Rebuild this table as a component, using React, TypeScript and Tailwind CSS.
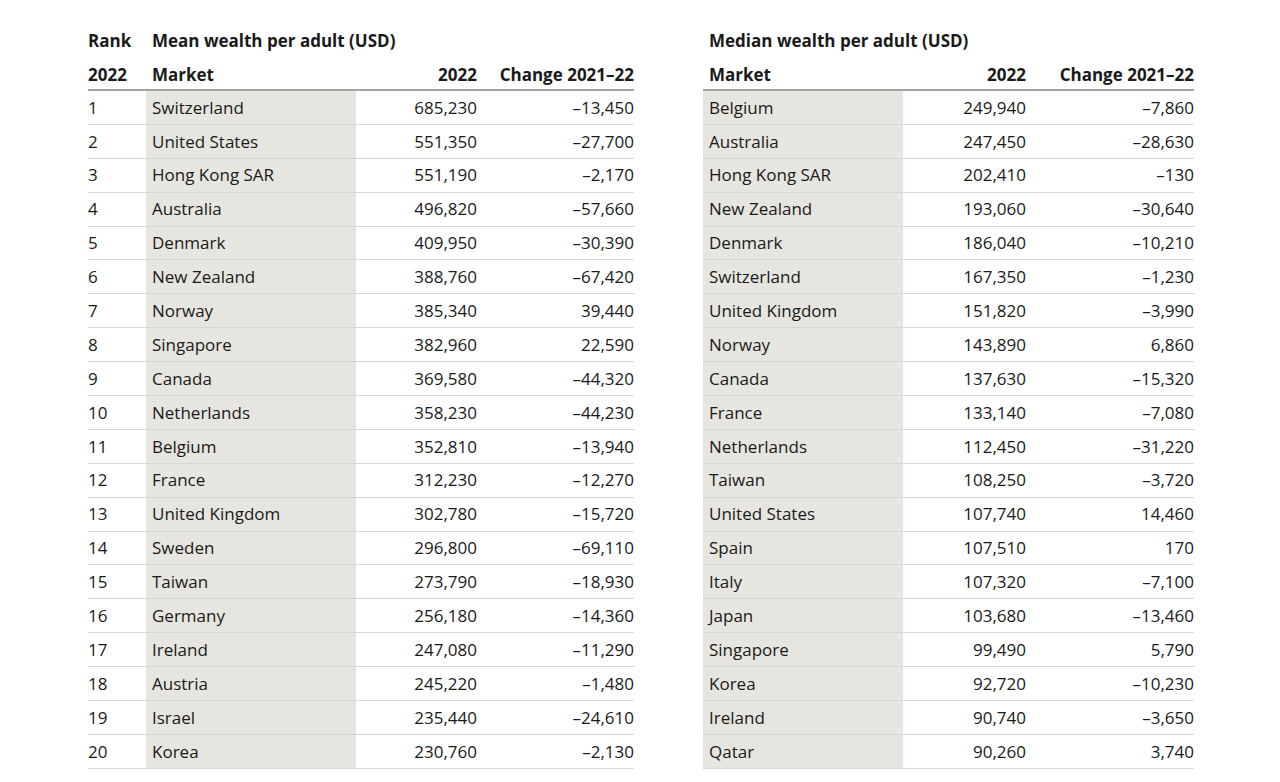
const mean = [
  ["1", "Switzerland", "685,230", "–13,450"],
  ["2", "United States", "551,350", "–27,700"],
  ["3", "Hong Kong SAR", "551,190", "–2,170"],
  ["4", "Australia", "496,820", "–57,660"],
  ["5", "Denmark", "409,950", "–30,390"],
  ["6", "New Zealand", "388,760", "–67,420"],
  ["7", "Norway", "385,340", "39,440"],
  ["8", "Singapore", "382,960", "22,590"],
  ["9", "Canada", "369,580", "–44,320"],
  ["10", "Netherlands", "358,230", "–44,230"],
  ["11", "Belgium", "352,810", "–13,940"],
  ["12", "France", "312,230", "–12,270"],
  ["13", "United Kingdom", "302,780", "–15,720"],
  ["14", "Sweden", "296,800", "–69,110"],
  ["15", "Taiwan", "273,790", "–18,930"],
  ["16", "Germany", "256,180", "–14,360"],
  ["17", "Ireland", "247,080", "–11,290"],
  ["18", "Austria", "245,220", "–1,480"],
  ["19", "Israel", "235,440", "–24,610"],
  ["20", "Korea", "230,760", "–2,130"],
];

const median = [
  ["Belgium", "249,940", "–7,860"],
  ["Australia", "247,450", "–28,630"],
  ["Hong Kong SAR", "202,410", "–130"],
  ["New Zealand", "193,060", "–30,640"],
  ["Denmark", "186,040", "–10,210"],
  ["Switzerland", "167,350", "–1,230"],
  ["United Kingdom", "151,820", "–3,990"],
  ["Norway", "143,890", "6,860"],
  ["Canada", "137,630", "–15,320"],
  ["France", "133,140", "–7,080"],
  ["Netherlands", "112,450", "–31,220"],
  ["Taiwan", "108,250", "–3,720"],
  ["United States", "107,740", "14,460"],
  ["Spain", "107,510", "170"],
  ["Italy", "107,320", "–7,100"],
  ["Japan", "103,680", "–13,460"],
  ["Singapore", "99,490", "5,790"],
  ["Korea", "92,720", "–10,230"],
  ["Ireland", "90,740", "–3,650"],
  ["Qatar", "90,260", "3,740"],
];

function MeanTable() {
  return (
    <div className="w-[546px] shrink-0">
      <div className="flex h-[33px] items-center font-bold">
        <div className="w-[58px]">Rank</div>
        <div className="pl-[6px]">Mean wealth per adult (USD)</div>
      </div>
      <div className="flex h-[34px] pt-[3px] items-center font-bold border-b-2 border-[#a3a3a3]">
        <div className="w-[58px]">2022</div>
        <div className="w-[210px] pl-[6px]">Market</div>
        <div className="w-[121px] text-right">2022</div>
        <div className="w-[157px] text-right">Change 2021–22</div>
      </div>
      {mean.map((r) => (
        <div key={r[0]} className="flex h-[33.9px] border-b border-[#d6d6d6]">
          <div className="w-[58px] flex items-center">{r[0]}</div>
          <div className="w-[210px] pl-[6px] flex items-center bg-[#e6e5df]">{r[1]}</div>
          <div className="w-[121px] flex items-center justify-end">{r[2]}</div>
          <div className="w-[157px] flex items-center justify-end">{r[3]}</div>
        </div>
      ))}
    </div>
  );
}

function MedianTable() {
  return (
    <div className="w-[491px] shrink-0">
      <div className="flex h-[33px] items-center font-bold pl-[6px]">
        Median wealth per adult (USD)
      </div>
      <div className="flex h-[34px] pt-[3px] items-center font-bold border-b-2 border-[#a3a3a3]">
        <div className="w-[200px] pl-[6px]">Market</div>
        <div className="w-[123px] text-right">2022</div>
        <div className="w-[168px] text-right">Change 2021–22</div>
      </div>
      {median.map((r) => (
        <div key={r[0]} className="flex h-[33.9px] border-b border-[#d6d6d6]">
          <div className="w-[200px] pl-[6px] flex items-center bg-[#e6e5df]">{r[0]}</div>
          <div className="w-[123px] flex items-center justify-end">{r[1]}</div>
          <div className="w-[168px] flex items-center justify-end">{r[2]}</div>
        </div>
      ))}
    </div>
  );
}

export default function App() {
  return (
    <div
      className="min-h-[782px] bg-white text-[#1a1a1a] text-[17px] pt-[24px] pl-[88px] flex gap-[69px]"
      style={{ fontFamily: '"Open Sans", "Noto Sans", sans-serif' }}
    >
      <MeanTable />
      <MedianTable />
    </div>
  );
}
